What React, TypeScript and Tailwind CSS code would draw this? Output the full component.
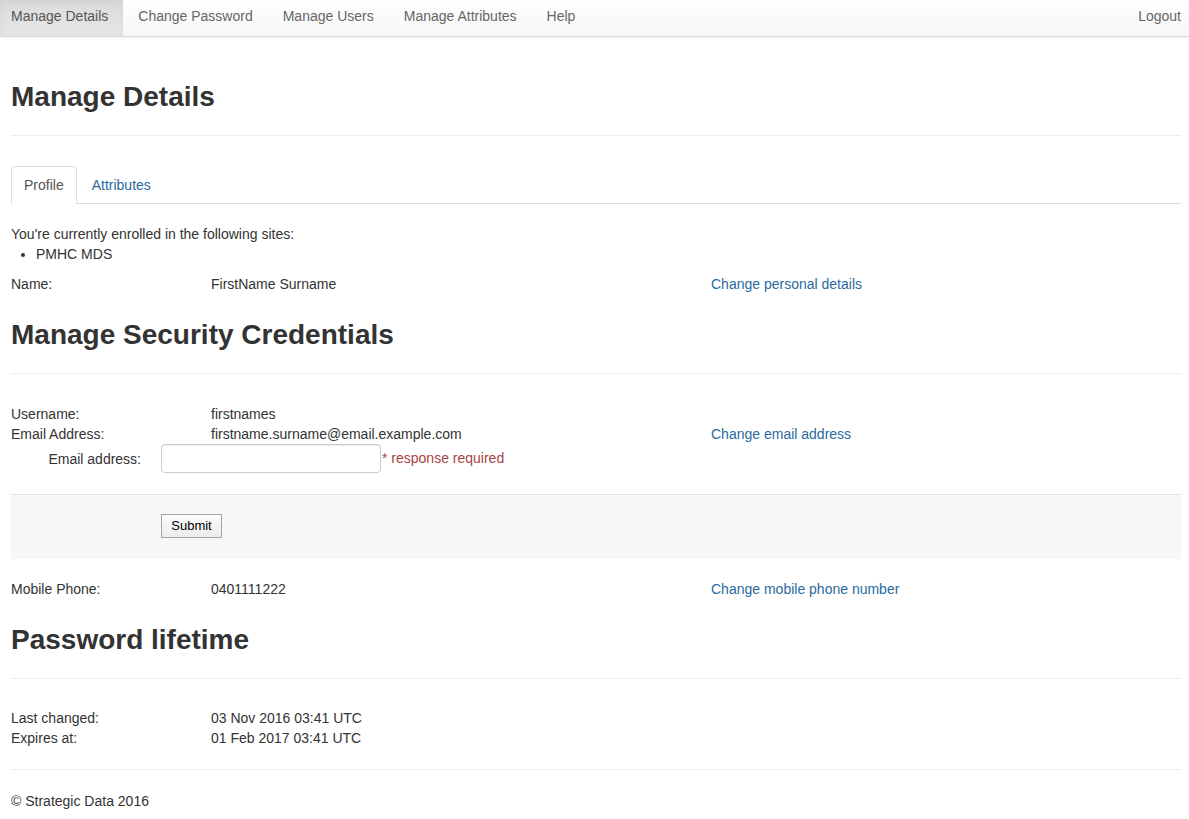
import React from "react";

const link = "text-[#2a6aa0]";

function Row({ label, value, action }: { label: string; value: string; action?: string }) {
  return (
    <div className="flex h-[20px] leading-[20px]">
      <div className="w-[200px] shrink-0">{label}</div>
      <div className="w-[500px] shrink-0">{value}</div>
      {action ? <div className={link}>{action}</div> : null}
    </div>
  );
}

function Heading({ children, top }: { children: React.ReactNode; top: string }) {
  return (
    <div className={`${top} border-b border-[#eee] pb-[23px]`}>
      <h1 className="text-[28px] font-bold leading-[31px] text-[#333]">{children}</h1>
    </div>
  );
}

export default function App() {
  const navItems = ["Change Password", "Manage Users", "Manage Attributes", "Help"];
  return (
    <div
      className="min-h-[819px] bg-white text-[14px] leading-[20px] text-[#333]"
      style={{ fontFamily: '"Liberation Sans", Arial, sans-serif' }}
    >
      <nav className="flex h-[37px] border-b border-[#d8d8d8] bg-gradient-to-b from-white to-[#f6f6f6] shadow-[0_1px_3px_rgba(0,0,0,0.06)]">
        <div className="h-[36px] bg-gradient-to-b from-[#dcdcdc] to-[#e6e6e6] pl-[11px] pr-[15px] pt-[6px] leading-[20px] text-[#555] shadow-[inset_0_3px_8px_rgba(0,0,0,0.05)]">
          Manage Details
        </div>
        {navItems.map((t) => (
          <div key={t} className="h-[36px] px-[15px] pt-[6px] leading-[20px] text-[#666]">
            {t}
          </div>
        ))}
        <div className="flex-1" />
        <div className="h-[36px] pr-[8px] pt-[6px] leading-[20px] text-[#666]">Logout</div>
      </nav>

      <main className="pl-[11px] pr-[8px]">
        <Heading top="mt-[44px]">Manage Details</Heading>

        <div className="mt-[30px] flex h-[38px] border-b border-[#ddd]">
          <div className="h-[38px] rounded-t-[4px] border border-b-0 border-[#ddd] bg-white px-[12px] pt-[8px] leading-[20px] text-[#555] -mb-px">
            Profile
          </div>
          <div className={`ml-[2px] px-[13px] pt-[9px] leading-[20px] ${link}`}>Attributes</div>
        </div>

        <div className="mt-[20px]">You're currently enrolled in the following sites:</div>
        <ul className="mb-[10px] list-disc pl-[25px]">
          <li>PMHC MDS</li>
        </ul>
        <Row label="Name:" value="FirstName Surname" action="Change personal details" />

        <Heading top="mt-[25px]">Manage Security Credentials</Heading>

        <div className="mt-[30px]">
          <Row label="Username:" value="firstnames" />
          <Row label="Email Address:" value="firstname.surname@email.example.com" action="Change email address" />
        </div>
        <div className="flex h-[29px] items-center">
          <div className="w-[150px] shrink-0 pr-[20px] text-right">Email address:</div>
          <input
            type="text"
            className="h-[29px] w-[220px] rounded-[4px] border border-[#ccc] bg-white shadow-[inset_0_1px_1px_rgba(0,0,0,0.075)]"
          />
          <span className="ml-[1px] -mt-[1px] text-[#a94442]">* response required</span>
        </div>
        <div className="mt-[21px] h-[65px] border-t border-[#e5e5e5] bg-[#f7f7f7] pl-[150px] pt-[19px]">
          <button className="h-[24px] w-[61px] border border-[#a6a6a6] bg-gradient-to-b from-[#fcfcfc] to-[#ececec] text-[13px] leading-[20px] text-black">
            Submit
          </button>
        </div>

        <div className="mt-[20px]">
          <Row label="Mobile Phone:" value="0401111222" action="Change mobile phone number" />
        </div>

        <Heading top="mt-[25px]">Password lifetime</Heading>

        <div className="mt-[29px] border-b border-[#eee] pb-[21px]">
          <Row label="Last changed:" value="03 Nov 2016 03:41 UTC" />
          <Row label="Expires at:" value="01 Feb 2017 03:41 UTC" />
        </div>

        <div className="mt-[21px]">© Strategic Data 2016</div>
      </main>
    </div>
  );
}
